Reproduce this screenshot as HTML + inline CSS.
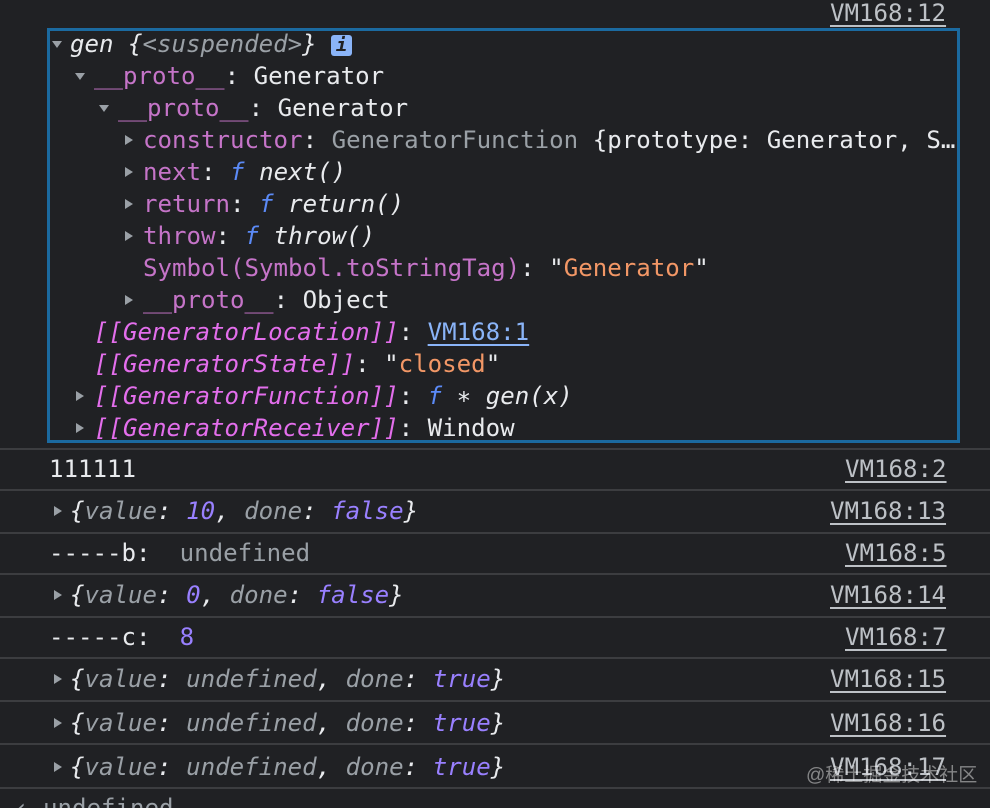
<!DOCTYPE html>
<html><head><meta charset="utf-8"><style>
html,body{margin:0;padding:0;background:#202124;width:990px;height:808px;overflow:hidden}
body{font-family:"DejaVu Sans Mono","Liberation Mono",monospace;font-size:24.1px;color:#e8eaed;position:relative}
.l{position:absolute;white-space:pre;line-height:32px;height:32px}
.p{color:#c574c8}
.i{color:#e36eec;font-style:italic}
.g{color:#9aa0a6}
.s{color:#f29766}
.f{color:#5b8af6;font-style:italic}
.n{color:#9980ff}
.it{font-style:italic}
.lk{color:#bdc1c6;text-decoration:underline;text-underline-offset:4px;text-decoration-thickness:2px}
.bl{color:#8ab4f8;text-decoration:underline;text-underline-offset:4px;text-decoration-thickness:2px}
.ar{position:absolute;width:12px;height:12px}
.box{position:absolute;left:47px;top:28px;width:907px;height:409px;border:3px solid #1b6aa0}
.sep{position:absolute;left:0;width:990px;height:2px;background:#3c3d40}
.wm{position:absolute;left:806px;top:760px;color:rgba(255,255,255,0.45);font-family:"Liberation Sans","Noto Sans CJK SC",sans-serif;font-size:19px}
</style></head><body>
<svg width="0" height="0" style="position:absolute"><defs>
<symbol id="d" viewBox="0 0 12 12"><path d="M1 3h10L6 10z" fill="#9aa0a6"/></symbol>
<symbol id="r" viewBox="0 0 12 12"><path d="M2 1v10l8-5z" fill="#9aa0a6"/></symbol>
</defs></svg>
<div class="l lk" style="left:830px;top:-3px">VM168:12</div>
<div class="box"></div>
<svg class="ar" style="left:51px;top:38px"><use href="#d"/></svg>
<div class="l" style="left:70px;top:28px"><span class="it">gen {</span><span class="it g">&lt;suspended&gt;</span><span class="it">}</span> <span style="display:inline-block;width:21px;height:21px;background:#8ab4f8;color:#202124;border-radius:3px;font-size:19px;line-height:21px;text-align:center;font-weight:bold;font-style:italic;vertical-align:1px">i</span></div>
<svg class="ar" style="left:74px;top:70px"><use href="#d"/></svg>
<div class="l" style="left:94px;top:60px"><span class="p">__proto__</span>: Generator</div>
<svg class="ar" style="left:98px;top:102px"><use href="#d"/></svg>
<div class="l" style="left:118px;top:92px"><span class="p">__proto__</span>: Generator</div>
<svg class="ar" style="left:123px;top:134px"><use href="#r"/></svg>
<div class="l" style="left:143px;top:124px"><span class="p">constructor</span>: <span class="g">GeneratorFunction</span> {prototype: Generator, S…</div>
<svg class="ar" style="left:123px;top:166px"><use href="#r"/></svg>
<div class="l" style="left:143px;top:156px"><span class="p">next</span>: <span class="f">f</span> <span class="it">next()</span></div>
<svg class="ar" style="left:123px;top:198px"><use href="#r"/></svg>
<div class="l" style="left:143px;top:188px"><span class="p">return</span>: <span class="f">f</span> <span class="it">return()</span></div>
<svg class="ar" style="left:123px;top:230px"><use href="#r"/></svg>
<div class="l" style="left:143px;top:220px"><span class="p">throw</span>: <span class="f">f</span> <span class="it">throw()</span></div>
<div class="l" style="left:143px;top:252px"><span class="p">Symbol(Symbol.toStringTag)</span>: "<span class="s">Generator</span>"</div>
<svg class="ar" style="left:123px;top:294px"><use href="#r"/></svg>
<div class="l" style="left:143px;top:284px"><span class="p">__proto__</span>: Object</div>
<div class="l" style="left:94px;top:316px"><span class="i">[[GeneratorLocation]]</span>: <span class="bl">VM168:1</span></div>
<div class="l" style="left:94px;top:348px"><span class="i">[[GeneratorState]]</span>: "<span class="s">closed</span>"</div>
<svg class="ar" style="left:74px;top:390px"><use href="#r"/></svg>
<div class="l" style="left:94px;top:380px"><span class="i">[[GeneratorFunction]]</span>: <span class="f">f</span> ∗ <span class="it">gen(x)</span></div>
<svg class="ar" style="left:74px;top:422px"><use href="#r"/></svg>
<div class="l" style="left:94px;top:412px"><span class="i">[[GeneratorReceiver]]</span>: Window</div>

<div class="sep" style="top:448px"></div>
<div class="l" style="left:49px;top:453px">111111</div>
<div class="l lk" style="left:845px;top:453px">VM168:2</div>
<div class="sep" style="top:489px"></div>
<svg class="ar" style="left:52px;top:505px"><use href="#r"/></svg>
<div class="l it" style="left:70px;top:495px">{<span class="g">value</span>: <span class="n">10</span>, <span class="g">done</span>: <span class="n">false</span>}</div>
<div class="l lk" style="left:830px;top:495px">VM168:13</div>
<div class="sep" style="top:532px"></div>
<div class="l" style="left:49px;top:537px">-----b:  <span class="g">undefined</span></div>
<div class="l lk" style="left:845px;top:537px">VM168:5</div>
<div class="sep" style="top:573px"></div>
<svg class="ar" style="left:52px;top:589px"><use href="#r"/></svg>
<div class="l it" style="left:70px;top:579px">{<span class="g">value</span>: <span class="n">0</span>, <span class="g">done</span>: <span class="n">false</span>}</div>
<div class="l lk" style="left:830px;top:579px">VM168:14</div>
<div class="sep" style="top:616px"></div>
<div class="l" style="left:49px;top:621px">-----c:  <span class="n">8</span></div>
<div class="l lk" style="left:845px;top:621px">VM168:7</div>
<div class="sep" style="top:657px"></div>
<svg class="ar" style="left:52px;top:673px"><use href="#r"/></svg>
<div class="l it" style="left:70px;top:663px">{<span class="g">value</span>: <span class="g">undefined</span>, <span class="g">done</span>: <span class="n">true</span>}</div>
<div class="l lk" style="left:830px;top:663px">VM168:15</div>
<div class="sep" style="top:700px"></div>
<svg class="ar" style="left:52px;top:717px"><use href="#r"/></svg>
<div class="l it" style="left:70px;top:707px">{<span class="g">value</span>: <span class="g">undefined</span>, <span class="g">done</span>: <span class="n">true</span>}</div>
<div class="l lk" style="left:830px;top:707px">VM168:16</div>
<div class="sep" style="top:743px"></div>
<svg class="ar" style="left:52px;top:761px"><use href="#r"/></svg>
<div class="l it" style="left:70px;top:751px">{<span class="g">value</span>: <span class="g">undefined</span>, <span class="g">done</span>: <span class="n">true</span>}</div>
<div class="l lk" style="left:830px;top:751px">VM168:17</div>
<div class="wm">@稀土掘金技术社区</div>
<div class="sep" style="top:787px"></div>
<div class="l g" style="left:14px;top:792px">‹ undefined</div>
</body></html>
